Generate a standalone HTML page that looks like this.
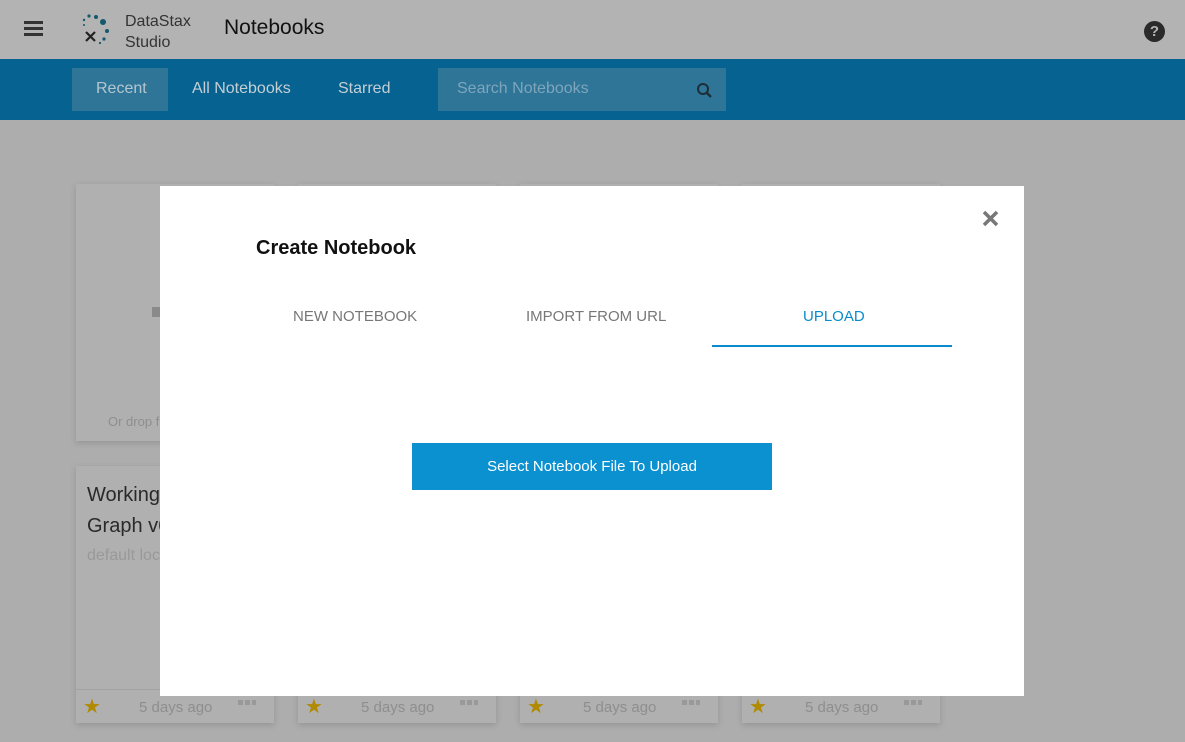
<!DOCTYPE html>
<html><head><meta charset="utf-8"><style>
*{box-sizing:border-box;margin:0;padding:0}
body{width:1185px;height:742px;overflow:hidden;background:#adadad;font-family:"Liberation Sans",sans-serif;position:relative}
.hdr{position:absolute;left:0;top:0;width:1185px;height:59px;background:#b3b3b3}
.nav{position:absolute;left:0;top:59px;width:1185px;height:61px;background:#066391}
.t{position:absolute;white-space:nowrap}
.card{position:absolute;width:198px;height:257px;background:#b0b0b0;box-shadow:0 2px 6px rgba(0,0,0,.15)}
.foot{position:absolute;left:0;bottom:0;width:198px;height:34px;border-top:1px solid #a3a3a3}
.star{position:absolute;left:7px;top:4px;color:#b08a00;font-size:20px}
.days{position:absolute;left:63px;top:9px;color:#8e8e8e;font-size:15px}
.dots{position:absolute;left:162px;top:10px;width:18px;height:5px;background:repeating-linear-gradient(90deg,#999 0 5px,transparent 5px 7px)}
.modal{position:absolute;left:160px;top:186px;width:864px;height:510px;background:#fff}
</style></head><body>
<div class="hdr"></div>
<div style="position:absolute;left:24px;top:21px;width:19px;height:3px;background:#333;box-shadow:0 6px 0 #333,0 12px 0 #333"></div>
<svg style="position:absolute;left:80px;top:13px" width="34" height="32" viewBox="0 0 34 32">
<circle cx="9" cy="3" r="1.6" fill="#145a6a"/><circle cx="16" cy="4" r="2" fill="#145a6a"/><circle cx="23" cy="9" r="3" fill="#145a6a"/><circle cx="4" cy="7" r="1.2" fill="#145a6a"/><circle cx="27" cy="18" r="2" fill="#145a6a"/><circle cx="24" cy="26" r="1.6" fill="#145a6a"/><circle cx="20" cy="30" r="1.1" fill="#145a6a"/><circle cx="4" cy="12" r="1" fill="#145a6a"/>
<path d="M6 19l9 9M15 19l-9 9" stroke="#222" stroke-width="2.2"/></svg>
<div class="t" style="left:125px;top:11px;font-size:16px;color:#333;line-height:21px">DataStax<br>Studio</div>
<div class="t" style="left:224px;top:16px;font-size:21px;color:#111">Notebooks</div>
<div style="position:absolute;left:1144px;top:21px;width:21px;height:21px;border-radius:50%;background:#2a2a2a;color:#b3b3b3;font-weight:bold;font-size:15px;text-align:center;line-height:21px">?</div>
<div class="nav"></div>
<div style="position:absolute;left:72px;top:68px;width:96px;height:43px;background:#2e7598"></div>
<div class="t" style="left:96px;top:80px;font-size:16px;color:#b5c6d0">Recent</div>
<div class="t" style="left:192px;top:80px;font-size:16px;color:#c5ced4">All Notebooks</div>
<div class="t" style="left:338px;top:80px;font-size:16px;color:#c5ced4">Starred</div>
<div style="position:absolute;left:438px;top:68px;width:288px;height:43px;background:#2e7598"></div>
<div class="t" style="left:457px;top:80px;font-size:16px;color:#7fa5bb">Search Notebooks</div>
<svg style="position:absolute;left:696px;top:82px" width="17" height="17"><circle cx="7" cy="7" r="5" fill="none" stroke="#1e2e38" stroke-width="2"/><path d="M11 11l4 4" stroke="#1e2e38" stroke-width="2.4"/></svg>

<div class="card" style="left:76px;top:184px"><div style="position:absolute;left:76px;top:123px;width:8px;height:10px;background:#8a8a8a"></div><div class="t" style="left:32px;top:230px;font-size:13px;color:#8e8e8e">Or drop f</div></div>
<div class="card" style="left:298px;top:184px"></div>
<div class="card" style="left:520px;top:184px"></div>
<div class="card" style="left:742px;top:184px"></div>
<div class="card" style="left:76px;top:466px"><div class="t" style="left:11px;top:14px;font-size:20px;color:#2a2a2a;line-height:31px">Working<br>Graph v6</div><div class="t" style="left:11px;top:81px;font-size:16px;color:#999">default loc</div><div class="foot"><span class="star">★</span><span class="days">5 days ago</span><span class="dots"></span></div></div>
<div class="card" style="left:298px;top:466px"><div class="foot"><span class="star">★</span><span class="days">5 days ago</span><span class="dots"></span></div></div>
<div class="card" style="left:520px;top:466px"><div class="foot"><span class="star">★</span><span class="days">5 days ago</span><span class="dots"></span></div></div>
<div class="card" style="left:742px;top:466px"><div class="foot"><span class="star">★</span><span class="days">5 days ago</span><span class="dots"></span></div></div>

<div class="modal">
<svg style="position:absolute;left:822px;top:24px" width="17" height="17"><path d="M2 2l13 13M15 2L2 15" stroke="#777" stroke-width="3.5"/></svg>
<div class="t" style="left:96px;top:51px;font-size:20px;font-weight:bold;color:#111">Create Notebook</div>
<div class="t" style="left:133px;top:122px;font-size:15px;color:#777">NEW NOTEBOOK</div>
<div class="t" style="left:366px;top:122px;font-size:15px;color:#777">IMPORT FROM URL</div>
<div class="t" style="left:643px;top:122px;font-size:15px;color:#0a8ccc">UPLOAD</div>
<div style="position:absolute;left:552px;top:159px;width:240px;height:2px;background:#0a8ccc"></div>
<div style="position:absolute;left:252px;top:257px;width:360px;height:47px;background:#0b90d0;color:#fff;font-size:15px;text-align:center;line-height:47px">Select Notebook File To Upload</div>
</div>
</body></html>
